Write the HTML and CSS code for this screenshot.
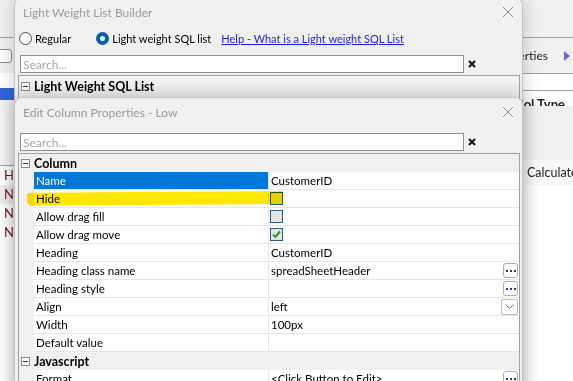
FILE: index.html
```html
<!DOCTYPE html>
<html>
<head>
    <title>Light Weight List Builder</title>
    <link rel="stylesheet" href="styles.css">
</head>
<body>
    <!-- application behind the dialogs -->
    <div class="app">
        <div class="app-left">
            <div class="app-top"></div>
            <div class="app-toolbar"><span class="app-btn"></span></div>
            <div class="app-field"></div>
            <div class="app-selected"></div>
            <div class="app-gap"></div>
            <div class="app-row">H</div>
            <div class="app-row alt">N</div>
            <div class="app-row">N</div>
            <div class="app-row">N</div>
        </div>
        <div class="app-right">
            <div class="app-top"></div>
            <div class="app-toolbar right">
                <span>Properties</span>
                <svg class="tri" width="6" height="10" viewBox="0 0 6 10"><path d="M0 0 L6 5 L0 10 Z"/></svg>
            </div>
            <div class="app-box"></div>
            <div class="app-head"><span>Col Type</span></div>
            <div class="app-shade"></div>
            <div class="app-calc">Calculated</div>
        </div>
    </div>

    <div class="dialog builder">
        <div class="dialog-title">
            <span>Light Weight List Builder</span>
            <svg class="close" width="10" height="10" viewBox="0 0 10 10"><path d="M0 0 L10 10 M10 0 L0 10"/></svg>
        </div>
        <div class="radio-row">
            <span class="radio"></span><span class="radio-label">Regular</span>
            <span class="radio checked"></span><span class="radio-label">Light weight SQL list</span>
            <a class="help" href="#">Help - What is a Light weight SQL List</a>
        </div>
        <div class="search-row">
            <input class="search" type="text" placeholder="Search...">
            <svg class="clear" width="8" height="8" viewBox="0 0 8 8"><path d="M1 1 L7 7 M7 1 L1 7"/></svg>
        </div>
        <div class="props">
            <div class="group big"><span class="toggle"></span><span>Light Weight SQL List</span></div>
        </div>
    </div>

    <div class="dialog editor">
        <div class="dialog-title">
            <span>Edit Column Properties - Low</span>
            <svg class="close" width="10" height="10" viewBox="0 0 10 10"><path d="M0 0 L10 10 M10 0 L0 10"/></svg>
        </div>
        <div class="search-row">
            <input class="search" type="text" placeholder="Search...">
            <svg class="clear" width="8" height="8" viewBox="0 0 8 8"><path d="M1 1 L7 7 M7 1 L1 7"/></svg>
        </div>
        <div class="props">
            <div class="group"><span class="toggle"></span><span>Column</span></div>

            <div class="prop selected"><span class="gutter"></span><span class="name">Name</span><span class="value">CustomerID</span></div>
            <div class="prop"><span class="gutter"></span><span class="name">Hide</span><span class="value"><span class="check"></span></span></div>
            <div class="prop"><span class="gutter"></span><span class="name">Allow drag fill</span><span class="value"><span class="check"></span></span></div>
            <div class="prop"><span class="gutter"></span><span class="name">Allow drag move</span><span class="value"><span class="check">
                <svg width="11" height="11" viewBox="0 0 11 11"><path d="M2 5.5 L4.5 8 L9 2.5"/></svg>
            </span></span></div>
            <div class="prop"><span class="gutter"></span><span class="name">Heading</span><span class="value">CustomerID</span></div>
            <div class="prop"><span class="gutter"></span><span class="name">Heading class name</span><span class="value">spreadSheetHeader<span class="dots"><i></i><i></i><i></i></span></span></div>
            <div class="prop"><span class="gutter"></span><span class="name">Heading style</span><span class="value"><span></span><span class="dots"><i></i><i></i><i></i></span></span></div>
            <div class="prop"><span class="gutter"></span><span class="name">Align</span><span class="value">left<span class="drop">
                <svg width="9" height="5" viewBox="0 0 9 5"><path d="M0.5 0.5 L4.5 4.5 L8.5 0.5"/></svg>
            </span></span></div>
            <div class="prop"><span class="gutter"></span><span class="name">Width</span><span class="value">100px</span></div>
            <div class="prop"><span class="gutter"></span><span class="name">Default value</span><span class="value"></span></div>

            <div class="group"><span class="toggle"></span><span>Javascript</span></div>

            <div class="prop"><span class="gutter"></span><span class="name">Format</span><span class="value">&lt;Click Button to Edit&gt;<span class="dots"><i></i><i></i><i></i></span></span></div>

            <!-- marker stroke drawn over the Hide row -->
            <span class="marker"></span>
        </div>
    </div>
</body>
</html>
```

FILE: styles.css
```css
* {
    box-sizing: border-box;
}
body {
    margin: 0;
    width: 573px;
    height: 381px;
    overflow: hidden;
    position: relative;
    background: #fff;
    font-family: Lato, "Noto Sans", sans-serif;
    font-size: 11.5px;
    color: #000;
}

/* background application */
.app {
    display: grid;
    grid-template-columns: 1fr 50px;
    height: 100%;
}
.app-top {
    height: 38px;
    background: #f0f0f0;
    border-bottom: 1px solid #a0a0a0;
}
.app-toolbar {
    height: 35px;
    background: #f0f0f0;
    display: flex;
    align-items: center;
}
.app-toolbar.right {
    justify-content: flex-end;
    padding-right: 3px;
    gap: 16px;
    white-space: nowrap;
    color: #222;
    font-size: 12px;
}
.tri {
    fill: #6868d8;
    flex-shrink: 0;
}
.app-btn {
    width: 24px;
    height: 14px;
    margin-left: -12px;
    border: 1px solid #8a8a8a;
    border-radius: 3px;
    background: #fbfbfb;
}
.app-field {
    height: 15px;
    background: #fff;
}
.app-selected {
    height: 12px;
    background: #2f69df;
}
.app-gap {
    height: 66px;
    background: #f7f7f7;
    border-bottom: 1px solid #a0a0a0;
}
.app-row {
    height: 19px;
    line-height: 19px;
    padding-left: 4px;
    font-size: 13px;
    color: #6e1a1a;
}
.app-row.alt {
    background: #efefef;
}
.app-box {
    height: 18px;
    background: #fff;
    border-top: 1px solid #a0a0a0;
    border-bottom: 1px solid #a0a0a0;
}
.app-head {
    height: 15px;
    overflow: hidden;
    display: flex;
    justify-content: flex-end;
    padding-right: 8px;
    white-space: nowrap;
}
.app-head span {
    font-weight: bold;
    font-size: 13px;
    line-height: 15px;
    margin-top: 6px;
    color: #222;
}
.app-shade {
    height: 54px;
    background: #f0f0f0;
}
.app-calc {
    height: 25px;
    line-height: 25px;
    padding-left: 4px;
    background: #f8f8f8;
    white-space: nowrap;
    color: #222;
    font-size: 12.5px;
}

/* dialogs */
.dialog {
    position: absolute;
    left: 14px;
    width: 509px;
    background: #f0f0f0;
    border: 1px solid #c4c4c4;
    border-radius: 8px 8px 0 0;
    box-shadow: 0 0 18px rgba(0, 0, 0, 0.2);
}
.builder {
    top: -3px;
    height: 400px;
}
.editor {
    top: 97px;
    height: 300px;
}
.dialog-title {
    height: 28px;
    display: flex;
    align-items: center;
    justify-content: space-between;
    padding: 0 9px 0 8px;
    color: #9a9a9a;
    font-size: 12px;
}
.close {
    stroke: #8c8c8c;
    stroke-width: 1;
    fill: none;
}
.editor .dialog-title {
    margin-bottom: 7px;
}

.radio-row {
    height: 24px;
    display: flex;
    align-items: center;
    padding-left: 4px;
    font-size: 11px;
}
.radio {
    width: 13px;
    height: 13px;
    border-radius: 50%;
    border: 1px solid #505050;
    background: #f7f7f7;
}
.radio.checked {
    border: 4px solid #005fb8;
    background: #fff;
    margin-left: 25px;
}
.radio-label {
    margin-left: 3px;
}
.help {
    margin-left: 10px;
    color: #1a1aff;
    text-decoration: underline;
}

.search-row {
    display: flex;
    align-items: center;
    gap: 4px;
    padding-left: 5px;
}
.builder .search-row {
    margin-top: 5px;
}
.search {
    width: 444px;
    height: 18px;
    margin: 0;
    border: 1px solid #8f8f8f;
    background: #fff;
    padding: 0 2px;
    font-family: inherit;
    font-size: 12px;
    outline: none;
}
.search::placeholder {
    color: #a6a6a6;
}
.clear {
    stroke: #111;
    stroke-width: 2;
    fill: none;
}

/* property grid */
.props {
    position: relative;
    margin: 2px 2px 0 3px;
    border: 1px solid #a0a0a0;
    background: #f0f0f0;
}
.builder .props {
    height: 30px;
}
.group {
    height: 18px;
    display: flex;
    align-items: center;
    gap: 4px;
    padding-left: 2px;
    font-weight: bold;
    font-size: 12.5px;
    background: #f0f0f0;
}
.group.big {
    height: 21px;
    background: linear-gradient(#f4f4f4, #e9e9e9);
}
.toggle {
    position: relative;
    width: 9px;
    height: 9px;
    border: 1px solid #8c8c8c;
    background: #fafafa;
}
.toggle::after {
    content: "";
    position: absolute;
    left: 1px;
    top: 3px;
    width: 5px;
    height: 1px;
    background: #333;
}
.prop {
    display: grid;
    grid-template-columns: 15px 235px 1fr;
    height: 18px;
}
.prop .name,
.prop .value {
    display: flex;
    align-items: center;
    justify-content: space-between;
    background: #fff;
    border-bottom: 1px solid #e6e6e6;
    white-space: nowrap;
}
.prop .name {
    padding-left: 2px;
    border-right: 1px solid #e6e6e6;
}
.prop .value {
    padding: 0 1px 0 2px;
}
.prop.selected .name {
    background: #0078d7;
    color: #fff;
}
.check {
    width: 13px;
    height: 13px;
    margin-left: -1px;
    border: 1px solid #2b5a84;
    background: #e6e6e6;
    display: flex;
    align-items: center;
    justify-content: center;
}
.check svg {
    stroke: #2f9a2f;
    stroke-width: 2;
    fill: none;
}
.dots {
    width: 15px;
    height: 15px;
    border: 1px solid #adadad;
    border-radius: 3px;
    background: #fdfdfd;
    display: flex;
    align-items: flex-end;
    justify-content: center;
    gap: 2px;
    padding-bottom: 5px;
}
.dots i {
    width: 2px;
    height: 2px;
    background: #3b2a9c;
}
.drop {
    width: 17px;
    height: 16px;
    border: 1px solid #bdbdbd;
    border-radius: 2px;
    background: #fdfdfd;
    display: flex;
    align-items: center;
    justify-content: center;
}
.drop svg {
    stroke: #707070;
    fill: none;
}
.marker {
    position: absolute;
    left: 8px;
    top: 38px;
    width: 256px;
    height: 13px;
    background: #ffe800;
    mix-blend-mode: multiply;
    border-radius: 3px 1px 1px 5px;
    transform: rotate(-0.4deg);
}
```
